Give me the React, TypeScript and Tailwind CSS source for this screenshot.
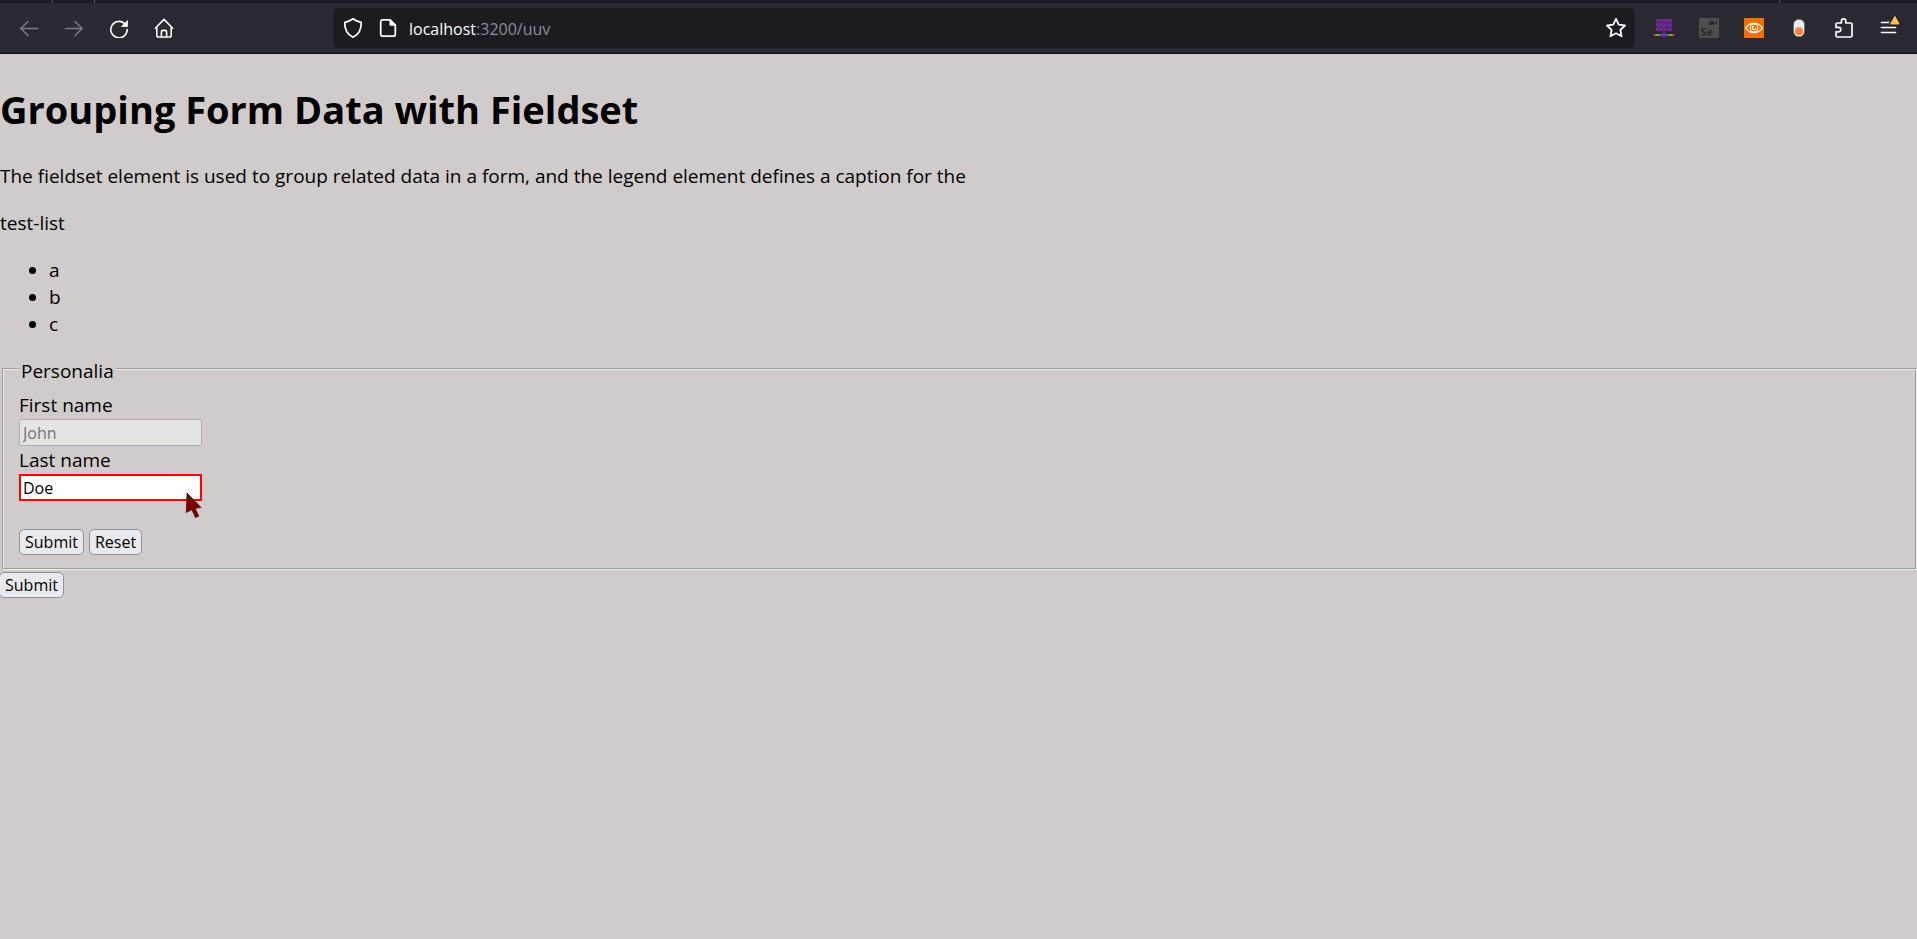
import type { ReactNode } from "react";

const stroke = {
  fill: "none",
  stroke: "currentColor",
  strokeWidth: 1.6,
  strokeLinecap: "round",
  strokeLinejoin: "round",
} as const;

function ToolButton({ label, disabled, children }: { label: string; disabled?: boolean; children: ReactNode }) {
  return (
    <button
      type="button"
      aria-label={label}
      disabled={disabled}
      className="flex h-10 w-[45px] shrink-0 items-center justify-center text-[#fbfbfe] disabled:text-[#7c7b82]"
    >
      {children}
    </button>
  );
}

function BackIcon() {
  return (
    <svg width="20" height="20" viewBox="0 0 20 20" {...stroke}>
      <path d="M18.5 10.5H1.5M9 3.5l-7.2 7 7.2 7" />
    </svg>
  );
}

function ForwardIcon() {
  return (
    <svg width="20" height="20" viewBox="0 0 20 20" {...stroke}>
      <path d="M1.5 10.5h17M11 3.5l7.2 7-7.2 7" />
    </svg>
  );
}

function ReloadIcon() {
  return (
    <svg width="20" height="20" viewBox="0 0 20 20" {...stroke}>
      <path d="M18.2 11.6A8.2 8.2 0 1 1 15.6 5.6" />
      <path d="M18.5 2.8v5.700h-5.700z" fill="currentColor" strokeWidth="0.8" />
    </svg>
  );
}

function HomeIcon() {
  return (
    <svg width="20" height="20" viewBox="0 0 20 20" {...stroke}>
      <path d="M1.3 10.2 10 1.4l8.7 8.8M2.8 9v8.2a1.8 1.8 0 0 0 1.8 1.8h10.8a1.8 1.8 0 0 0 1.8-1.8V9" />
      <path d="M7.4 19v-5a1.6 1.6 0 0 1 1.6-1.6h2a1.6 1.6 0 0 1 1.6 1.6v5" />
    </svg>
  );
}

function ShieldIcon() {
  return (
    <svg width="20" height="22" viewBox="0 0 20 22" {...stroke} strokeWidth={1.8}>
      <path d="M10 1.8c2.4 1.8 5 2.9 8.2 3.6.3 6.4-1.8 11.8-8.2 14.9C3.600 17.200 1.500 11.800 1.800 5.400 5 4.700 7.600 3.600 10 1.800z" />
    </svg>
  );
}

function PageIcon() {
  return (
    <svg width="18" height="20" viewBox="0 0 18 20" {...stroke} strokeWidth={1.8}>
      <path d="M3.700 1.900h7.300l5.300 5.300v9a2 2 0 0 1-2 2H3.700a2 2 0 0 1-2-2V3.900a2 2 0 0 1 2-2z" />
      <path d="M11 1.900v5.300h5.300z" fill="currentColor" strokeWidth="1" />
    </svg>
  );
}

function StarIcon() {
  return (
    <svg width="22" height="22" viewBox="0 0 22 22" {...stroke} strokeWidth={1.8}>
      <path d="M11 1.900 13.700 7.700l6.300.8-4.600 4.400 1.200 6.400L11 16.200l-5.600 3.100 1.200-6.400L2 8.500l6.300-.8z" />
    </svg>
  );
}

function ServerIcon() {
  return (
    <svg width="20" height="20" viewBox="0 0 20 20">
      <g fill="#74289a">
        <rect x="2" y="1" width="16" height="3.500" rx="1" />
        <rect x="2" y="5.300" width="16" height="3.500" rx="1" />
        <rect x="2" y="9.600" width="16" height="3.500" rx="1" />
        <rect x="9.300" y="13" width="1.400" height="4" />
      </g>
      <path
        fill="#4f1d70"
        d="M4 2.300h2v1H4zM8 2.300h2v1H8zM12 2.300h2v1h-2zM4 6.600h2v1H4zM8 6.600h2v1H8zM12 6.600h2v1h-2zM4 10.900h2v1H4zM8 10.900h2v1H8zM12 10.900h2v1h-2z"
      />
      <path fill="#c0563b" d="M0 16h2v2H0z" />
      <path fill="#b99535" d="M2 16h2v2H2z" />
      <path fill="#519b46" d="M4 16h2v2H4z" />
      <path fill="#3b6d9d" d="M6 16h2v2H6z" />
      <path fill="#3b6d9d" d="M12 16h2v2h-2z" />
      <path fill="#519b46" d="M14 16h2v2h-2z" />
      <path fill="#b99535" d="M16 16h2v2h-2z" />
      <path fill="#c0563b" d="M18 16h2v2h-2z" />
      <circle cx="10" cy="17" r="2.200" fill="#7f2fa6" />
    </svg>
  );
}

function SeleniumIcon() {
  return (
    <span className="relative flex size-5 items-end bg-[#4e4e4e] pl-0.5 font-['Open_Sans'] text-[11px] leading-[12px] font-bold text-[#2b2a33]">
      Se
      <svg className="absolute top-[3px] right-0.5" width="8" height="4" viewBox="0 0 8 4" fill="#2b2a33">
        <path d="M0 0h5v4H0zM5.400 2 8 0v4z" />
      </svg>
    </span>
  );
}

function EyeIcon() {
  return (
    <svg width="20" height="20" viewBox="0 0 20 20">
      <path fill="#f07000" d="M0 0h20v20H0z" />
      <g fill="none" stroke="#fff">
        <path strokeWidth="1.300" d="M1.600 10C5.500 3.800 14.500 3.800 18.400 10 14.500 16.200 5.500 16.200 1.600 10z" />
        <circle cx="10" cy="10" r="4" strokeWidth="0.900" />
        <circle cx="10" cy="10" r="1.700" strokeWidth="1.200" />
      </g>
      <path fill="#f07000" d="M10 7.600h2.600V10H10z" />
    </svg>
  );
}

function PillIcon() {
  return (
    <svg width="20" height="20" viewBox="0 0 20 20">
      <rect x="4.500" y="1.200" width="11" height="17.600" rx="5.500" fill="#ececec" stroke="#55545c" strokeWidth="0.600" />
      <circle cx="10" cy="13.200" r="4" fill="#f5823c" />
    </svg>
  );
}

function PuzzleIcon() {
  return (
    <svg width="20" height="22" viewBox="0 0 20 22" {...stroke} strokeWidth={1.700}>
      <path d="M2 8V7.400a1.400 1.400 0 0 1 1.400-1.400h4V4.100a2.200 2.200 0 0 1 4.400 0V6h4.800A1.400 1.400 0 0 1 18 7.400v11.200a1.400 1.400 0 0 1-1.400 1.400H3.400A1.400 1.400 0 0 1 2 18.600v-3.800h2.600a2.200 2.200 0 0 0 0-4.400H2z" />
    </svg>
  );
}

function MenuIcon() {
  return (
    <svg width="24" height="26" viewBox="0 0 24 26">
      <path d="M4.500 7.500h14M4.500 12.500h14M4.500 17.500h14" {...stroke} strokeWidth={1.700} />
      <path
        d="M16.800.900c.5-.8 1.700-.8 2.200 0l4.200 7.500c.5.900-.1 1.800-1 1.800h-8.600c-.9 0-1.500-.9-1-1.800z"
        fill="#ffbd4f"
        stroke="#1c1b22"
        strokeWidth="1.400"
      />
    </svg>
  );
}

function Toolbar() {
  return (
    <header className="border-b border-[#0c0c0d] bg-[#2b2a33]">
      <div className="flex h-[3px] bg-[#1c1b22]">
        <span className="ml-[52px] w-px bg-[#5b5b66]" />
        <span className="ml-[41px] w-px bg-[#5b5b66]" />
        <span className="mr-[137px] ml-auto w-px bg-[#5b5b66]" />
      </div>
      <div className="flex items-center px-1.5 py-[5px]">
        <nav aria-label="Navigation" className="mr-[147px] flex">
          <ToolButton label="Back" disabled>
            <BackIcon />
          </ToolButton>
          <ToolButton label="Forward" disabled>
            <ForwardIcon />
          </ToolButton>
          <ToolButton label="Reload">
            <ReloadIcon />
          </ToolButton>
          <ToolButton label="Home">
            <HomeIcon />
          </ToolButton>
        </nav>
        <div className="mr-1.5 flex h-10 flex-1 items-center rounded-md bg-[#1c1b22] pr-2 pl-2.5 text-[#fbfbfe]">
          <button type="button" aria-label="Tracking protection" className="mr-4">
            <ShieldIcon />
          </button>
          <button type="button" aria-label="Site information" className="mr-3">
            <PageIcon />
          </button>
          <p className="flex-1 pt-0.5 text-base leading-6">
            localhost<span className="text-[#8f8f98]">:3200/uuv</span>
          </p>
          <button type="button" aria-label="Bookmark this page">
            <StarIcon />
          </button>
        </div>
        <div className="flex">
          <ToolButton label="Server">
            <ServerIcon />
          </ToolButton>
          <ToolButton label="Selenium">
            <SeleniumIcon />
          </ToolButton>
          <ToolButton label="Inspector">
            <EyeIcon />
          </ToolButton>
          <ToolButton label="Toggle">
            <PillIcon />
          </ToolButton>
          <ToolButton label="Extensions">
            <PuzzleIcon />
          </ToolButton>
          <ToolButton label="Menu">
            <MenuIcon />
          </ToolButton>
        </div>
      </div>
    </header>
  );
}

function FormButton({ type, children }: { type: "submit" | "reset"; children: ReactNode }) {
  return (
    <button
      type={type}
      className="h-[26px] rounded-[5px] border border-[#8f8f9d] bg-[#e9e9ed] px-[5px] text-base leading-6"
    >
      {children}
    </button>
  );
}

function Pointer() {
  return (
    <svg className="absolute top-[18px] left-[166px]" width="18" height="27" viewBox="0 0 18 27" aria-hidden="true">
      <path
        d="M2 1 16 15.500l-6 .8 3.800 7.800-3.400 1.500-3.500-7.900L1.300 20.500z"
        fill="#7d0000"
        stroke="#3c1414"
        strokeWidth="0.800"
      />
    </svg>
  );
}

export default function App() {
  return (
    <div className="min-h-screen bg-[#d2cbcb] font-['Open_Sans','Noto_Sans',sans-serif] text-[19px] leading-[27px] text-black">
      <Toolbar />
      <main>
        <h1 className="mt-[29px] mb-[27px] text-[38px] leading-[53px] font-bold">Grouping Form Data with Fieldset</h1>
        <p className="mb-5">
          The fieldset element is used to group related data in a form, and the legend element defines a caption for the
        </p>
        <p className="mb-5">test-list</p>
        <ul className="mb-5 list-disc pl-[49px]">
          <li>a</li>
          <li>b</li>
          <li>c</li>
        </ul>
        <form onSubmit={(event) => event.preventDefault()}>
          <fieldset className="ml-0.5 border-2 border-[#efefef] px-[15px] pb-[13px] [border-style:groove]">
            <legend className="px-0.5 pt-1 leading-[18px]">Personalia</legend>
            <div className="flex flex-col items-start pt-3">
              <label htmlFor="fname">First name</label>
              <input
                id="fname"
                defaultValue="John"
                disabled
                className="mb-px h-[27px] w-[183px] rounded-[2px] border border-[#adadb8] bg-[#e6e4e3] px-[3px] text-base text-[#76706f]"
              />
              <label htmlFor="lname">Last name</label>
              <div className="relative">
                <input
                  id="lname"
                  defaultValue="Doe"
                  className="block h-[27px] w-[183px] border-2 border-[#ff0000] bg-white px-0.5 text-base outline-none"
                />
                <Pointer />
              </div>
            </div>
            <div className="mt-7 flex gap-[5px]">
              <FormButton type="submit">Submit</FormButton>
              <FormButton type="reset">Reset</FormButton>
            </div>
          </fieldset>
          <div className="-ml-px flex pt-0.5">
            <FormButton type="submit">Submit</FormButton>
          </div>
        </form>
      </main>
    </div>
  );
}
